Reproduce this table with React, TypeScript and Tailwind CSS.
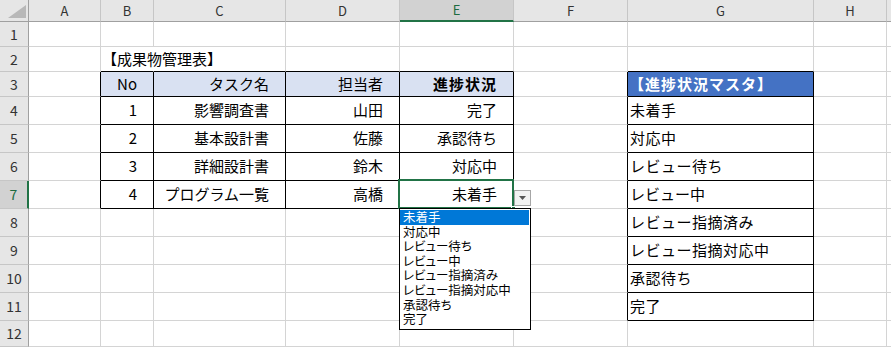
import React from "react";

const COLS = ["A", "B", "C", "D", "E", "F", "G", "H", "I"];
const ROWS = [1, 2, 3, 4, 5, 6, 7, 8, 9, 10, 11, 12, 13];

const STATUS_OPTIONS = [
  "未着手",
  "対応中",
  "レビュー待ち",
  "レビュー中",
  "レビュー指摘済み",
  "レビュー指摘対応中",
  "承認待ち",
  "完了",
];

// right-aligned text with the indent used across the table
const num = "justify-end pr-[16px]";
const head = "justify-end pr-[16px] bg-[#d9e1f2]";
const master = "justify-start pl-[2px] tracking-[0.5px]";

const CELLS: Record<string, { text: string; className: string }> = {
  B2: { text: "【成果物管理表】", className: "justify-start pl-[1px] whitespace-nowrap" },
  B3: { text: "No", className: head },
  C3: { text: "タスク名", className: head },
  D3: { text: "担当者", className: head },
  E3: { text: "進捗状況", className: head + " font-bold tracking-[1px] pr-[15px]" },
  G3: {
    text: "【進捗状況マスタ】",
    className: "justify-start pl-[1px] bg-[#4472c4] text-white font-bold tracking-[1px] whitespace-nowrap",
  },
  B4: { text: "1", className: num },
  C4: { text: "影響調査書", className: num },
  D4: { text: "山田", className: num },
  E4: { text: "完了", className: num },
  G4: { text: "未着手", className: master },
  B5: { text: "2", className: num },
  C5: { text: "基本設計書", className: num },
  D5: { text: "佐藤", className: num },
  E5: { text: "承認待ち", className: num },
  G5: { text: "対応中", className: master },
  B6: { text: "3", className: num },
  C6: { text: "詳細設計書", className: num },
  D6: { text: "鈴木", className: num },
  E6: { text: "対応中", className: num },
  G6: { text: "レビュー待ち", className: master },
  B7: { text: "4", className: num },
  C7: { text: "プログラム一覧", className: num },
  D7: { text: "高橋", className: num },
  E7: { text: "未着手", className: num },
  G7: { text: "レビュー中", className: "justify-start pl-[2px]" },
  G8: { text: "レビュー指摘済み", className: master },
  G9: { text: "レビュー指摘対応中", className: master },
  G10: { text: "承認待ち", className: master },
  G11: { text: "完了", className: master },
};

function borders(col: string, row: number) {
  const inTasks = row >= 3 && row <= 7 && "BCDE".includes(col);
  const inMaster = row >= 3 && row <= 11 && col === "G";
  const right =
    inTasks || inMaster || (row >= 3 && row <= 7 && col === "A") || (row >= 3 && row <= 11 && col === "F");
  const bottom = inTasks || inMaster || (row === 2 && "BCDEG".includes(col));
  // text in B2 spills over, so no gridline under it
  const r = col === "B" && row === 2 ? "border-r-white" : right ? "border-r-black" : "border-r-[#d4d4d4]";
  const b = bottom ? "border-b-black" : "border-b-[#d4d4d4]";
  return `${r} ${b}`;
}

function Dropdown() {
  return (
    <>
      {/* selection frame + fill handle */}
      <div className="absolute -left-[2px] -top-[2px] -right-[1px] -bottom-[1px] border-2 border-[#217346] pointer-events-none" />
      <div className="absolute -right-[3px] -bottom-[3px] w-[5px] h-[5px] bg-[#217346] border border-white" />
      {/* list arrow button */}
      <div className="absolute left-[114px] top-[9px] w-[17px] h-[16px] border border-[#a6a6a6] bg-[#f2f2f2] flex items-center justify-center z-10">
        <svg width="7" height="4" viewBox="0 0 7 4">
          <polygon points="0,0 7,0 3.5,4" fill="#555" />
        </svg>
      </div>
      {/* open list */}
      <div className="absolute -left-[1px] top-[27px] w-[132px] h-[122px] border border-black bg-white pt-[1px] pr-[1px] z-10 font-['Noto_Sans_CJK_JP',sans-serif] text-[12.5px] [font-feature-settings:'palt'] text-black">
        {STATUS_OPTIONS.map((s, i) => (
          <div
            key={s}
            className={
              i === 0
                ? "h-[14.6px] leading-[14.6px] pl-[3px] bg-[#0078d7] text-white whitespace-nowrap"
                : "h-[14.6px] leading-[14.6px] pl-[3px] whitespace-nowrap"
            }
          >
            {s}
          </div>
        ))}
      </div>
    </>
  );
}

export default function App() {
  return (
    <div className="w-[891px] h-[347px] overflow-hidden bg-white font-['Noto_Sans_CJK_JP',sans-serif] text-black">
      <div className="grid grid-cols-[29px_72px_53px_132px_114px_114px_114px_186px_73px_100px] grid-rows-[22px_25px_25px_25px_28px_28px_28px_28px_28px_28px_28px_28px_26px_25px]">
        {/* column headers */}
        <div className="bg-[#e6e6e6] border-r border-b border-r-[#a0a0a0] border-b-[#a0a0a0] flex items-end justify-end pr-[2px] pb-[3px]">
          <svg width="18" height="13" viewBox="0 0 18 13">
            <polygon points="18,0 18,13 0,13" fill="#b8b8b8" />
          </svg>
        </div>
        {COLS.map((c) =>
          c === "E" ? (
            <div
              key={c}
              className="bg-[#d2d2d2] border-r border-b-2 border-r-[#c6c6c6] border-b-[#217346] flex items-center justify-center text-[13px] text-[#1d6b40]"
            >
              {c}
            </div>
          ) : (
            <div
              key={c}
              className="bg-[#e6e6e6] border-r border-b border-r-[#c6c6c6] border-b-[#a0a0a0] flex items-center justify-center text-[13px] text-[#333]"
            >
              {c === "I" ? "" : c}
            </div>
          )
        )}

        {ROWS.map((r) => (
          <React.Fragment key={r}>
            {r === 7 ? (
              <div className="bg-[#d2d2d2] border-r-2 border-b border-r-[#217346] border-b-[#c6c6c6] flex items-center justify-center text-[14px] text-[#1d6b40]">
                {r}
              </div>
            ) : (
              <div className="bg-[#e6e6e6] border-r border-b border-r-[#a0a0a0] border-b-[#c6c6c6] flex items-center justify-center text-[14px] text-[#333]">
                {r === 13 ? "" : r}
              </div>
            )}
            {COLS.map((c) => {
              const key = `${c}${r}`;
              const cell = CELLS[key];
              return (
                <div
                  key={key}
                  className={`relative flex items-center border-r border-b text-[15px] ${borders(c, r)} ${
                    cell ? cell.className : ""
                  }`}
                >
                  {cell?.text}
                  {key === "E7" && <Dropdown />}
                </div>
              );
            })}
          </React.Fragment>
        ))}
      </div>
    </div>
  );
}
